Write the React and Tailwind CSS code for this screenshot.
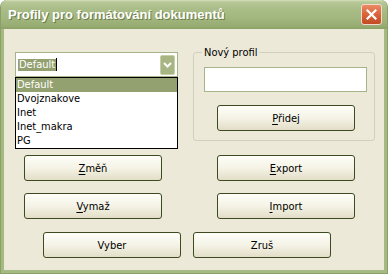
import React, { useState } from 'react';

// XP olive-theme dialog: "Profily pro formátování dokumentů"
const profiles = ['Default', 'Dvojznakove', 'Inet', 'Inet_makra', 'PG'];

const XpButton = ({ accel, rest, className = '' }) => (
  <button
    className={`w-[138px] h-[26px] rounded-[3px] border border-[#3d4a22] bg-gradient-to-b from-[#fefef9] via-[#f5f3e6] to-[#e2dec8] text-[11px] leading-[13px] text-black ${className}`}
  >
    {accel && <span className="underline underline-offset-[2px]">{accel}</span>}
    {rest}
  </button>
);

const CloseButton = () => (
  <div className="w-[21px] h-[21px] rounded-[3px] border border-[#f3d9cc] bg-gradient-to-b from-[#e98a63] via-[#d9643b] to-[#c24a24] flex items-center justify-center">
    <svg width="11" height="11" viewBox="0 0 11 11">
      <path d="M1.5 1.5 L9.5 9.5 M9.5 1.5 L1.5 9.5" stroke="#fff" strokeWidth="2.2" strokeLinecap="square" />
    </svg>
  </div>
);

const ComboBox = ({ selected }) => (
  <div className="w-[163px] flex flex-col">
    {/* edit field */}
    <div className="h-[25px] border border-[#a5b48b] bg-white flex items-center pl-[2px] pr-[2px]">
      <div className="flex-1 flex items-center">
        <span className="bg-[#93a070] text-white text-[11px] leading-[12px] px-[1px]">{selected}</span>
        <span className="w-px h-[13px] bg-black" />
      </div>
      <div className="w-[15px] h-[20px] rounded-[2px] bg-[#a7b582] border border-[#c4cfa6] flex items-center justify-center">
        <svg width="9" height="6" viewBox="0 0 9 6">
          <path d="M1 1 L4.5 4.5 L8 1" stroke="#fff" strokeWidth="2" fill="none" />
        </svg>
      </div>
    </div>
    {/* drop-down list */}
    <ul className="border border-black bg-white">
      {profiles.map((p) => (
        <li
          key={p}
          className={`h-[14px] pl-[1px] text-[11px] leading-[14px] ${
            p === selected ? 'bg-[#93a070] text-white' : 'text-black'
          }`}
        >
          {p}
        </li>
      ))}
    </ul>
  </div>
);

export default function App() {
  const [selected] = useState('Default');

  return (
    <div className="w-[388px] h-[274px] flex flex-col rounded-t-[7px] overflow-hidden bg-[#a5b982] border border-t-0 border-[#8aa066] font-['DejaVu_Sans_Condensed','Liberation_Sans',sans-serif]">
      {/* Title bar */}
      <div className="h-[29px] shrink-0 -mx-px flex items-center justify-between pl-[8px] pr-[6px] bg-[linear-gradient(to_bottom,#d6e0bb_0px,#b7c897_2px,#abbe89_8px,#a2b67e_18px,#97ac72_26px,#8ca166_29px)]">
        <span className="text-white font-bold text-[13px] leading-[16px] font-['Liberation_Sans',sans-serif] [text-shadow:1px_1px_0_#6b7d47]">
          Profily pro formátování dokumentů
        </span>
        <CloseButton />
      </div>

      {/* Body */}
      <div className="flex-1 mx-[3px] mb-[3px] bg-[#ece9d8] flex flex-col">
        <div className="flex items-start pt-[17px]">
          <div className="ml-[11px] mt-[6px]">
            <ComboBox selected={selected} />
          </div>
          <fieldset className="ml-[15px] w-[182px] border border-[#d0d0bf] rounded-[3px] pb-[9px]">
            <legend className="ml-[8px] px-[2px] text-[11px] leading-[13px] text-black">Nový profil</legend>
            <div className="mt-[8px] ml-[10px] w-[163px] h-[25px] border border-[#a5b48b] bg-white" />
            <XpButton accel="P" rest="řidej" className="mt-[13px] ml-[23px]" />
          </fieldset>
        </div>

        <div className="mt-[6px] flex flex-col gap-[12px]">
          <div className="flex pl-[20px] gap-[55px]">
            <XpButton accel="Z" rest="měň" />
            <XpButton accel="E" rest="xport" />
          </div>
          <div className="flex pl-[20px] gap-[55px]">
            <XpButton accel="V" rest="ymaž" />
            <XpButton accel="I" rest="mport" />
          </div>
          <div className="flex pl-[39px] gap-[12px] mt-[1px]">
            <XpButton rest="Vyber" />
            <XpButton rest="Zruš" />
          </div>
        </div>
      </div>
    </div>
  );
}
